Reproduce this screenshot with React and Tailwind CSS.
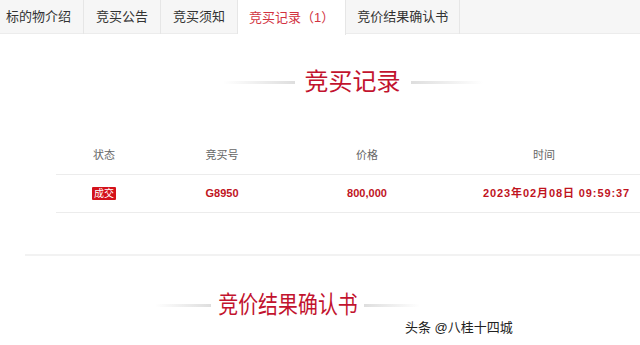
import React from "react";

const tabs = [
  { label: "标的物介绍", cls: "pl-[6px] pr-[12px]" },
  { label: "竞买公告", cls: "px-[12px]" },
  { label: "竞买须知", cls: "px-[12px]" },
  { label: "竞买记录（1）", cls: "px-[11px]", active: true },
  { label: "竞价结果确认书", cls: "px-[11px]" },
];

const cols = [
  { title: "状态", w: "w-[96px]" },
  { title: "竞买号", w: "w-[140px]" },
  { title: "价格", w: "w-[150px]" },
  { title: "时间", w: "w-[204px]" },
];

export default function App() {
  return (
    <div className="relative w-[640px] h-[345px] overflow-hidden bg-white font-['Liberation_Sans','Noto_Sans_CJK_SC',sans-serif]">
      {/* tab bar */}
      <div className="flex h-[34px] bg-[#f6f6f6] border-b border-[#ececec]">
        {tabs.map((t, i) => (
          <div
            key={i}
            className={`${t.cls} flex items-center h-[34px] text-[13px] whitespace-nowrap border-r border-[#e6e6e6] ${
              t.active ? "bg-white text-[#d2323f] h-[35px]" : "text-[#333]"
            }`}
          >
            {t.label}
          </div>
        ))}
      </div>

      <div className="ml-[25px] w-[655px]">
        <div className="mt-[32px] flex items-center justify-center gap-[10px]">
          <div className="w-[72px] h-[3px] bg-gradient-to-r from-transparent to-[#dedede]" />
          <h2 className="text-[24px] leading-[32px] text-[#c2132e] whitespace-nowrap">竞买记录</h2>
          <div className="w-[72px] h-[3px] bg-gradient-to-l from-transparent to-[#dedede]" />
        </div>

        {/* records table */}
        <div className="ml-[31px] mt-[38px] w-[590px] text-[11px]">
          <div className="flex h-[39px] items-center border-b border-[#ececec] text-[#666]">
            {cols.map((c) => (
              <div key={c.title} className={`${c.w} text-center`}>
                {c.title}
              </div>
            ))}
          </div>
          <div className="flex h-[38px] items-center border-b border-[#ececec] text-[#c0141e] font-bold">
            <div className="w-[96px] flex justify-center">
              <span className="bg-[#d4121b] text-white text-[10px] font-normal leading-[13px] px-[2px] rounded-[1px]">成交</span>
            </div>
            <div className="w-[140px] text-center">G8950</div>
            <div className="w-[150px] text-center">800,000</div>
            <div className="w-[204px] pl-[41px] whitespace-nowrap tracking-[0.9px]">2023年02月08日 09:59:37</div>
          </div>
        </div>

        <div className="mt-[41px] h-[2px] bg-[#f2f2f2]" />

        {/* second heading sits a bit left of the first one */}
        <div className="mt-[33px] ml-[130px] flex items-center gap-[10px]">
          <div className="w-[56px] h-[3px] bg-gradient-to-r from-transparent to-[#dedede]" />
          <div className="w-[133px] flex justify-center">
            <h2 className="text-[24px] leading-[32px] text-[#c2132e] whitespace-nowrap scale-x-[0.83]">竞价结果确认书</h2>
          </div>
          <div className="w-[56px] h-[3px] bg-gradient-to-l from-transparent to-[#dedede]" />
        </div>
      </div>

      <div className="absolute left-[405px] top-[320px] text-[13px] leading-[16px] text-[#222] whitespace-nowrap">
        头条 @八桂十四城
      </div>
    </div>
  );
}
